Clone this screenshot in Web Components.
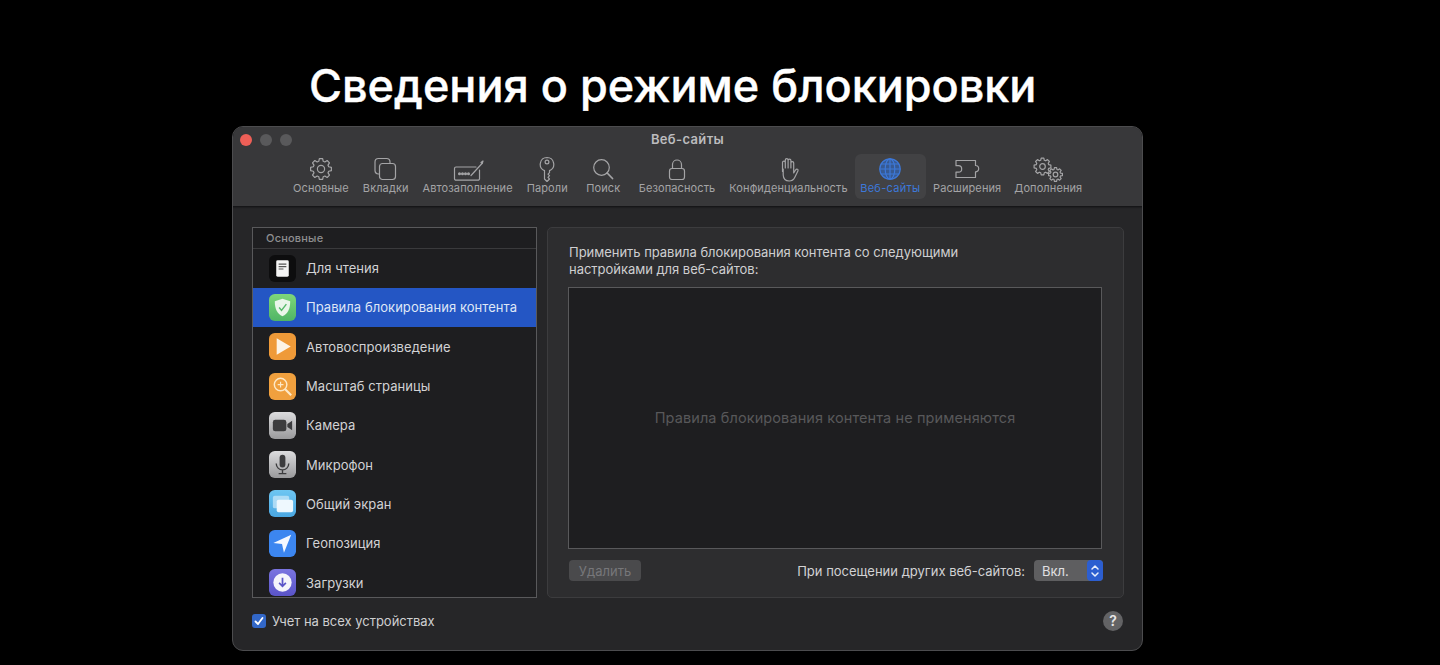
<!doctype html>
<html lang="ru"><head><meta charset="utf-8"><title>Сведения о режиме блокировки</title>
<style>
html,body{margin:0;background:#000;height:665px;overflow:hidden;font-family:Inter,"Liberation Sans",sans-serif}
</style></head><body>
<lock-page>
  <h-title slot="title">Сведения о режиме блокировки</h-title>
  <mac-window wtitle="Веб-сайты">
    <pref-tool slot="tools" icon="gear" w="24">Основные</pref-tool>
    <pref-tool slot="tools" icon="tabs" w="24">Вкладки</pref-tool>
    <pref-tool slot="tools" icon="fill" w="32">Автозаполнение</pref-tool>
    <pref-tool slot="tools" icon="key" w="24">Пароли</pref-tool>
    <pref-tool slot="tools" icon="search" w="24">Поиск</pref-tool>
    <pref-tool slot="tools" icon="lock" w="24">Безопасность</pref-tool>
    <pref-tool slot="tools" icon="hand" w="24">Конфиденциальность</pref-tool>
    <pref-tool slot="tools" icon="globe" w="24" selected>Веб-сайты</pref-tool>
    <pref-tool slot="tools" icon="puzzle" w="26">Расширения</pref-tool>
    <pref-tool slot="tools" icon="gears" w="30">Дополнения</pref-tool>

    <site-list slot="list" heading="Основные">
      <site-row icon="reader">Для чтения</site-row>
      <site-row icon="shield" selected>Правила блокирования контента</site-row>
      <site-row icon="play">Автовоспроизведение</site-row>
      <site-row icon="zoom">Масштаб страницы</site-row>
      <site-row icon="camera">Камера</site-row>
      <site-row icon="mic">Микрофон</site-row>
      <site-row icon="screen">Общий экран</site-row>
      <site-row icon="geo">Геопозиция</site-row>
      <site-row icon="down">Загрузки</site-row>
    </site-list>

    <detail-panel slot="panel"></detail-panel>
    <sync-check slot="foot-left">Учет на всех устройствах</sync-check>
    <help-button slot="foot-right"></help-button>
  </mac-window>
</lock-page>
<script>
function gearPath(cx,cy,ro,ri,n){
  let d='';const st=Math.PI*2/n;
  for(let i=0;i<n;i++){
    const a=i*st-Math.PI/2;
    const pts=[[ri,a-st*.36],[ro,a-st*.2],[ro,a+st*.2],[ri,a+st*.36]];
    pts.forEach((p,j)=>{const x=cx+p[0]*Math.cos(p[1]),y=cy+p[0]*Math.sin(p[1]);
      d+=(i===0&&j===0?'M':'L')+x.toFixed(2)+' '+y.toFixed(2)+' ';});
  }
  return d+'Z';
}
const TOOL_ICONS={
 gear:`<path d="${gearPath(12,13,10.5,8,8)}"/><circle cx="12" cy="13" r="3.6"/>`,
 tabs:`<rect x="1" y="2.5" width="15" height="15.5" rx="3.5"/><rect x="5.5" y="7.5" width="16" height="16" rx="3" fill="#38383a"/>`,
 fill:`<path d="M24 11H4a1.5 1.5 0 0 0-1.5 1.5v10.2A1.5 1.5 0 0 0 4 24.2h22a1.5 1.5 0 0 0 1.5-1.500V14"/><path d="M19 19.500 30 7.500"/><path d="M29 6.500l2-1.500-.8 2.500z" fill="currentColor"/><circle cx="7.500" cy="17.800" r=".9" fill="currentColor"/><circle cx="10.500" cy="17.800" r=".9" fill="currentColor"/><circle cx="13.500" cy="17.800" r=".9" fill="currentColor"/><circle cx="16.500" cy="17.800" r=".9" fill="currentColor"/>`,
 key:`<path d="M12 1.500a6.800 6.800 0 0 0-2.500 13.100V23l2.500 2.500 2.500-2.500-1.500-1.700 1.500-1.600-1.500-1.500 1.500-1.500v-2.100A6.800 6.800 0 0 0 12 1.500z"/><circle cx="12" cy="6" r="1.900"/>`,
 search:`<circle cx="10.500" cy="11.500" r="7.800"/><path d="M16.200 17 21.500 22.500" stroke-width="1.800"/>`,
 lock:`<rect x="4.500" y="12.500" width="15" height="11" rx="2.500"/><path d="M7.500 12.500V8.500a4.500 4.500 0 0 1 9 0v4"/>`,
 hand:`<path d="M6.500 15.500V6.500a1.400 1.400 0 0 1 2.800 0V12M9.300 12V4a1.400 1.400 0 0 1 2.800 0V12M12.100 12V4.500a1.400 1.400 0 0 1 2.800 0V12M14.900 12V7a1.400 1.400 0 0 1 2.800 0V17l2-3.200c1-1.400 3-.4 2.200 1.200l-3.200 6.500c-1.200 2.400-3 3.500-5.500 3.500-3.800 0-5.800-2.300-6-6V13"/>`,
 globe:`<circle cx="12" cy="13" r="10.200" fill="#2f6fd6" fill-opacity=".55"/><ellipse cx="12" cy="13" rx="4.800" ry="10.200"/><path d="M12 2.800V23.200M1.800 13H22.200M3.200 8H20.800M3.200 18H20.800"/>`,
 puzzle:`<path d="M2 4.500h19.500v5a3.200 3.200 0 0 1 0 6.400v5.600H2v-5.400h2.500a3.200 3.200 0 0 0 0-6.400H2z"/>`,
 gears:`<path d="${gearPath(9.500,10.500,8.500,6.500,8)}"/><circle cx="9.500" cy="10.500" r="2.800"/><path d="${gearPath(22.500,18.500,7,5.200,8)}"/><circle cx="22.500" cy="18.500" r="2.300"/>`
};
class LockPage extends HTMLElement{constructor(){super();this.attachShadow({mode:'open'}).innerHTML=`
<style>:host{display:flex;flex-direction:column;height:665px;padding:59px 0 0 232px;box-sizing:border-box}
.t{padding-left:77px;height:67px}</style><div class="t"><slot name="title"></slot></div><slot></slot>`}}
class HTitle extends HTMLElement{constructor(){super();this.attachShadow({mode:'open'}).innerHTML=`
<style>:host{display:block;font:500 45px/54px Inter,"Liberation Sans",sans-serif;-webkit-text-stroke:.4px #fff;color:#fff;white-space:nowrap}</style><slot></slot>`}}
class MacWindow extends HTMLElement{constructor(){super();this.attachShadow({mode:'open'}).innerHTML=`
<style>
:host{display:block;width:911px;height:525px;box-sizing:border-box;border:1px solid #4c4c4e;border-radius:11px;background:#262628;overflow:hidden;font-family:Inter,"Liberation Sans",sans-serif}
.bar{background:#38383a;height:78.500px;border-bottom:1px solid #161618;box-shadow:0 1px 1px #1e1e20}
.tb{display:grid;grid-template-columns:1fr auto 1fr;align-items:center;height:24px;margin-bottom:3px;padding:0 7px}
.lights{display:flex;gap:8px;margin-top:2px}
.lights i{width:12px;height:12px;border-radius:50%;background:#59595b}
.lights i:first-child{background:#ee5f57}
.title{font-size:13px;font-weight:600;color:#bcbcbe;letter-spacing:.35px}
.tools{display:flex;justify-content:flex-start;padding-left:53px}
.main{display:flex;gap:10px;padding:20px 19px 0;height:371px}
.foot{display:flex;justify-content:space-between;align-items:center;padding:13px 19px 0;}
</style>
<div class="bar"><div class="tb"><div class="lights"><i></i><i></i><i></i></div><div class="title"></div><div></div></div>
<div class="tools"><slot name="tools"></slot></div></div>
<div class="main"><slot name="list"></slot><slot name="panel"></slot></div>
<div class="foot"><slot name="foot-left"></slot><slot name="foot-right"></slot></div>`;
 this.shadowRoot.querySelector('.title').textContent=this.getAttribute('wtitle')}}
class PrefTool extends HTMLElement{constructor(){super();const w=+this.getAttribute('w'),ic=this.getAttribute('icon');
 this.attachShadow({mode:'open'}).innerHTML=`
<style>
:host{display:flex;flex-direction:column;align-items:center;height:45px;padding:0 7px;box-sizing:border-box;border-radius:6px;color:#a4a4a6;font-size:11px;line-height:14px;letter-spacing:.1px;white-space:nowrap}
:host([icon=search]){min-width:57px}
:host([icon=gears]){padding-left:6px}
:host([selected]){background:#424244;color:#3d78d8;padding:0 5.500px;letter-spacing:.3px}
svg{display:block;margin-top:2px;height:26px;fill:none;stroke:currentColor;stroke-width:1.200;stroke-linejoin:round;stroke-linecap:round;margin-bottom:-1px}
</style>
<svg viewBox="0 0 ${w} 26" width="${w}">${TOOL_ICONS[ic]}</svg><slot></slot>`}}
class SiteList extends HTMLElement{constructor(){super();this.attachShadow({mode:'open'}).innerHTML=`
<style>
:host{display:block;width:285px;height:371px;box-sizing:border-box;border:1px solid #59595b;background:#1e1e20;overflow:hidden;flex:none}
.h{height:20px;line-height:21px;padding-left:13px;font-size:11px;font-weight:500;color:#8e8e90;border-bottom:1px solid #3a3a3c;letter-spacing:.2px}
</style><div class="h"></div><slot></slot>`;
 this.shadowRoot.querySelector('.h').textContent=this.getAttribute('heading')}}
const ROW_ICONS={
 reader:`<rect width="28" height="28" rx="6" fill="#0d0d0e"/><rect x="7.500" y="5.500" width="13" height="17" rx="1.500" fill="#f4f4f4"/><path d="M10 9.500h8M10 12h8M10 14.500h5" stroke="#555" stroke-width="1.200"/>`,
 shield:`<defs><linearGradient id="g" x2="0" y2="1"><stop offset="0" stop-color="#7ed67a"/><stop offset="1" stop-color="#4fb565"/></linearGradient></defs><rect width="28" height="28" rx="6" fill="url(#g)"/><path d="M14 5l8 2.500c0 8-2.500 13-8 15.500-5.500-2.500-8-7.500-8-15.500z" fill="#eaf6ea"/><path d="M10.500 14l2.500 3 5-6.500" fill="none" stroke="#56b96a" stroke-width="1.500"/>`,
 play:`<rect width="28" height="28" rx="6" fill="#ef9a38"/><path d="M8 5.500 22.500 14 8 22.500z" fill="#fdf4e6"/>`,
 zoom:`<rect width="28" height="28" rx="6" fill="#f0a03e"/><circle cx="12" cy="12" r="6.500" fill="none" stroke="#fde9c8" stroke-width="1.500"/><path d="M16.800 16.800 23 23" stroke="#fde9c8" stroke-width="2.200"/><path d="M9 12h6M12 9v6" stroke="#fde9c8" stroke-width="1.200"/>`,
 camera:`<defs><linearGradient id="c" x2="0" y2="1"><stop offset="0" stop-color="#dcdcde"/><stop offset="1" stop-color="#9a9a9c"/></linearGradient></defs><rect width="28" height="28" rx="6" fill="url(#c)"/><rect x="4" y="8" width="14" height="12" rx="2.500" fill="#3c3c3e"/><path d="M19 12.500 24 9v10l-5-3.500z" fill="#3c3c3e"/>`,
 mic:`<defs><linearGradient id="m" x2="0" y2="1"><stop offset="0" stop-color="#dcdcde"/><stop offset="1" stop-color="#9a9a9c"/></linearGradient></defs><rect width="28" height="28" rx="6" fill="url(#m)"/><rect x="11" y="4" width="6" height="13" rx="3" fill="#3c3c3e"/><path d="M7.500 13c0 4 3 6.500 6.500 6.500s6.500-2.500 6.500-6.500M14 19.500V23M10 23.500h8" fill="none" stroke="#3c3c3e" stroke-width="1.400"/>`,
 screen:`<defs><linearGradient id="s" x2="0" y2="1"><stop offset="0" stop-color="#6ec6f2"/><stop offset="1" stop-color="#4aa7e2"/></linearGradient></defs><rect width="28" height="28" rx="6" fill="url(#s)"/><rect x="4" y="6" width="17" height="13" rx="2" fill="#cfeafa" fill-opacity=".7"/><rect x="8" y="10" width="17" height="13" rx="2" fill="#eef8fe"/>`,
 geo:`<rect width="28" height="28" rx="6" fill="#3c86f0"/><path d="M23 5 4.500 13.500l9 1 2 9z" fill="#f4f8ff"/>`,
 down:`<defs><linearGradient id="d" x2="0" y2="1"><stop offset="0" stop-color="#7a74e0"/><stop offset="1" stop-color="#5a54c8"/></linearGradient></defs><rect width="28" height="28" rx="6" fill="url(#d)"/><circle cx="14" cy="14" r="9.500" fill="#f4f4fb"/><path d="M14 9v9M10.500 14.500 14 18l3.500-3.500" fill="none" stroke="#5a54c8" stroke-width="1.800"/>`
};
class SiteRow extends HTMLElement{constructor(){super();this.attachShadow({mode:'open'}).innerHTML=`
<style>
:host{display:flex;align-items:center;height:39.300px;padding-left:16px;gap:10px;font-size:13px;color:#d2d2d4;white-space:nowrap;letter-spacing:.05px}
:host([selected]){background:#2456c4;color:#dfe6f6}
svg{display:block;flex:none}
</style><svg width="27" height="27" viewBox="0 0 28 28">${ROW_ICONS[this.getAttribute('icon')]}</svg><slot></slot>`}}
class DetailPanel extends HTMLElement{constructor(){super();this.attachShadow({mode:'open'}).innerHTML=`
<style>
:host{display:flex;flex-direction:column;width:577px;height:371px;box-sizing:border-box;border:1px solid #3c3c3e;border-radius:5px;background:#2d2d2f;padding:16px 21px 0 20px;font-size:13px;color:#cfcfd1}
.d{line-height:17px;height:34px;white-space:nowrap;margin-left:1px;letter-spacing:-.03px}
.box{flex:none;height:262px;box-sizing:border-box;margin:9px 0 11.500px;width:534px;border:1px solid #59595b;background:#1e1e20;display:flex;align-items:center;justify-content:center;font-size:14.500px;color:#58585a;letter-spacing:.1px}
.row{display:flex;align-items:center;justify-content:space-between;width:534px;margin-left:1px}
.btn{width:72px;height:21px;border-radius:4px;background:#4a4a4c;color:#77777a;display:flex;align-items:center;justify-content:center}
.r{display:flex;align-items:center;gap:9px;color:#d2d2d4}
.sel{width:69px;height:21px;border-radius:4px;background:#5e5e60;display:flex;justify-content:space-between;align-items:center;padding-left:8px;box-sizing:border-box;color:#e0e0e2}
.arr{width:16px;height:21px;background:#2c5ed0;border-radius:4px;display:flex;align-items:center;justify-content:center}
</style>
<div class="d">Применить правила блокирования контента со следующими<br>настройками для веб-сайтов:</div>
<div class="box">Правила блокирования контента не применяются</div>
<div class="row"><div class="btn">Удалить</div>
<div class="r"><span>При посещении других веб-сайтов:</span><div class="sel"><span>Вкл.</span><span class="arr"><svg width="10" height="14" viewBox="0 0 10 14" fill="none" stroke="#e8eefc" stroke-width="1.500" stroke-linecap="round" stroke-linejoin="round"><path d="M2 5l3-3 3 3M2 9l3 3 3-3"/></svg></span></div></div></div>`}}
class SyncCheck extends HTMLElement{constructor(){super();this.attachShadow({mode:'open'}).innerHTML=`
<style>
:host{display:flex;align-items:center;gap:6px;font-size:13px;color:#cfcfd1;letter-spacing:-.02px;white-space:nowrap}
.c{width:14px;height:14px;border-radius:3px;background:#3267c8;display:flex;align-items:center;justify-content:center}
</style><span class="c"><svg width="12" height="12" viewBox="0 0 12 12" fill="none" stroke="#fff" stroke-width="1.800" stroke-linecap="round" stroke-linejoin="round"><path d="M2.500 6.500 5 9l4.500-6"/></svg></span><slot></slot>`}}
class HelpButton extends HTMLElement{constructor(){super();this.attachShadow({mode:'open'}).innerHTML=`
<style>
:host{display:flex;width:20px;height:20px;border-radius:50%;background:#636365;color:#e6e6e8;align-items:center;justify-content:center;font-size:14px;font-weight:600}
</style>?`}}
[['lock-page',LockPage],['h-title',HTitle],['mac-window',MacWindow],['pref-tool',PrefTool],['site-list',SiteList],['site-row',SiteRow],['detail-panel',DetailPanel],['sync-check',SyncCheck],['help-button',HelpButton]].forEach(([n,c])=>customElements.define(n,c));
</script>
</body></html>
